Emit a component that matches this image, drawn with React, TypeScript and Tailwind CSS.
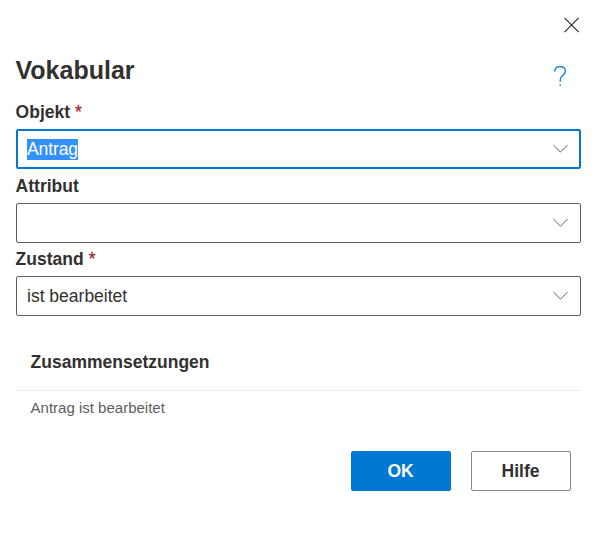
import { useState } from 'react';

function Chevron() {
  return (
    <svg width="16" height="10" viewBox="0 0 16 10" fill="none" stroke="#605e5c" strokeWidth="1" aria-hidden="true">
      <path d="M0.4 1 L7.5 8.1 L14.6 1" />
    </svg>
  );
}

interface FieldProps {
  label: string;
  required?: boolean;
  value: string;
  focused?: boolean;
  onSelect: () => void;
}

function Field({ label, required, value, focused, onSelect }: FieldProps) {
  return (
    <div>
      <div className="-ml-[0.4px] flex h-[34px] items-center text-[17.5px] font-bold text-[#323130]">
        {label}
        {required && <span className="ml-[5px] font-normal text-[#a4262c] [-webkit-text-stroke:0.3px_#a4262c]">*</span>}
      </div>
      <div
        onClick={onSelect}
        className={
          focused
            ? 'flex h-10 items-center justify-between rounded-[2px] border-2 border-[#0078d4] pr-[10px] pl-[9px]'
            : 'flex h-10 items-center justify-between rounded-[2px] border border-[#605e5c] pr-[11px] pl-[10px]'
        }
      >
        <span
          className={
            focused
              ? 'bg-[#3390ff] text-[17.5px] leading-[21px] tracking-[-0.1px] text-white'
              : 'text-[17.5px] leading-[21px] text-[#323130]'
          }
        >
          {value}
        </span>
        <Chevron />
      </div>
    </div>
  );
}

export default function App() {
  const [active, setActive] = useState(0);
  return (
    <main className="flex h-[550px] w-[596px] flex-col bg-white pr-[15px] pl-4 font-['Liberation_Sans',Arial,sans-serif]">
      <div className="flex h-[50px] justify-end pt-[17px]">
        <button aria-label="Schließen" className="h-4 w-4 -translate-x-px">
          <svg width="16" height="16" viewBox="0 0 16 16" fill="none" stroke="#323130" strokeWidth="1.25">
            <path d="M0.5 0.9 L14.7 15.1 M14.7 0.9 L0.5 15.1" />
          </svg>
        </button>
      </div>
      <header className="flex h-[45px] justify-between">
        <h1 className="-ml-[0.5px] pt-[4px] text-[25px] leading-[32px] font-bold text-[#323130]">Vokabular</h1>
        <button aria-label="Hilfe anzeigen" className="mt-4 mr-[15px] h-5 w-3">
          <svg width="12" height="20" viewBox="0 0 12 20" fill="none" stroke="#0078d4" strokeWidth="1.25">
            <path d="M0.7 5.8 C0.7 2.7 2.9 0.7 6 0.7 C9.1 0.7 11.3 2.6 11.3 5.4 C11.3 9.6 6.2 9.6 6.2 13.7 V15.8" />
            <path d="M6.2 18.6 V20" />
          </svg>
        </button>
      </header>
      <Field label="Objekt" required value="Antrag" focused={active === 0} onSelect={() => setActive(0)} />
      <Field label="Attribut" value="" focused={active === 1} onSelect={() => setActive(1)} />
      <div className="-mt-px">
        <Field label="Zustand" required value="ist bearbeitet" focused={active === 2} onSelect={() => setActive(2)} />
      </div>
      <section className="mt-[18px]">
        <h2 className="flex h-[57px] items-center border-b border-[#edebe9] pl-[14.6px] text-[17.5px] font-bold text-[#323130]">
          Zusammensetzungen
        </h2>
        <p className="flex h-[34px] items-center pl-[14.6px] text-[15px] text-[#605e5c]">Antrag ist bearbeitet</p>
      </section>
      <footer className="mt-[26px] flex justify-end gap-5 pr-[10px] text-[17.5px] font-bold">
        <button className="h-10 w-[100px] rounded-[2px] bg-[#0078d4] pr-px text-white">OK</button>
        <button className="h-10 w-[100px] rounded-[2px] border border-[#8a8886] pr-px text-[#323130]">Hilfe</button>
      </footer>
    </main>
  );
}
